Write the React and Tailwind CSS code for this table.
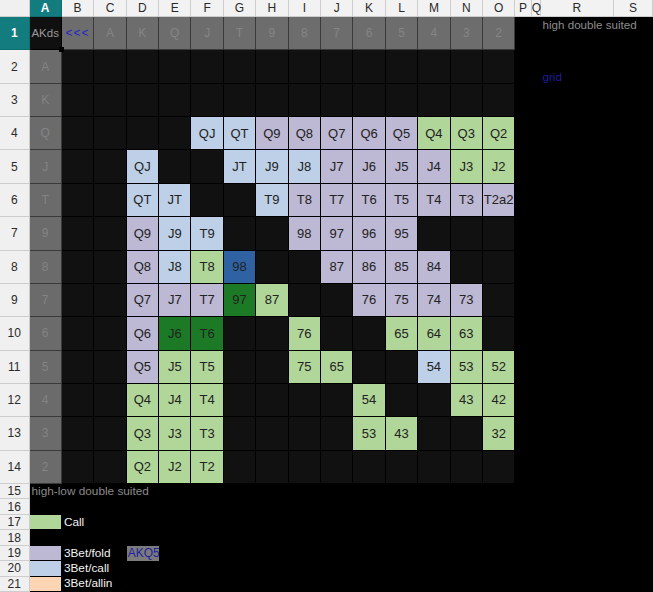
import React from "react";

const COLS = ["A","B","C","D","E","F","G","H","I","J","K","L","M","N","O","P","Q","R","S"];
const RANKS = ["A","K","Q","J","T","9","8","7","6","5","4","3","2"];

const TYPE = {
  k: "bg-[#111111]",
  l: "bg-[#bdb8d4]",
  b: "bg-[#bdd0e7]",
  g: "bg-[#b1d699]",
  G: "bg-[#1c7a27]",
  B: "bg-[#2f62a3]",
};

const GRID = {
  4: ["", "", "", "", "QJ b", "QT b", "Q9 l", "Q8 l", "Q7 l", "Q6 l", "Q5 l", "Q4 g", "Q3 g", "Q2 g"],
  5: ["", "", "QJ b", "", "", "JT b", "J9 b", "J8 b", "J7 l", "J6 l", "J5 l", "J4 l", "J3 g", "J2 g"],
  6: ["", "", "QT b", "JT b", "", "", "T9 b", "T8 l", "T7 l", "T6 l", "T5 l", "T4 l", "T3 l", "T2a2 l"],
  7: ["", "", "Q9 l", "J9 b", "T9 b", "", "", "98 l", "97 l", "96 l", "95 l", "", "", ""],
  8: ["", "", "Q8 l", "J8 b", "T8 g", "98 B", "", "", "87 l", "86 l", "85 l", "84 l", "", ""],
  9: ["", "", "Q7 l", "J7 l", "T7 l", "97 G", "87 g", "", "", "76 l", "75 l", "74 l", "73 l", ""],
  10: ["", "", "Q6 l", "J6 G", "T6 G", "", "", "76 g", "", "", "65 g", "64 g", "63 g", ""],
  11: ["", "", "Q5 l", "J5 g", "T5 g", "", "", "75 g", "65 g", "", "", "54 b", "53 g", "52 g"],
  12: ["", "", "Q4 g", "J4 g", "T4 g", "", "", "", "", "54 g", "", "", "43 g", "42 g"],
  13: ["", "", "Q3 g", "J3 g", "T3 g", "", "", "", "", "53 g", "43 g", "", "", "32 g"],
  14: ["", "", "Q2 g", "J2 g", "T2 g", "", "", "", "", "", "", "", "", ""],
};

function RowHead({ n, active }) {
  return (
    <div
      className={
        "flex items-center justify-center border-r border-b text-[12px] leading-none " +
        (active
          ? "bg-[#127c7f] border-[#0d6d70] text-white font-bold"
          : "bg-[#f0f0f0] border-[#cdcdcd] text-[#2a2a2a]")
      }
    >
      {n}
    </div>
  );
}

function Cell({ spec }) {
  if (!spec) return <div className="border-r border-b border-black bg-[#111111]" />;
  const [text, t] = spec.split(" ");
  return (
    <div
      className={
        "flex items-center justify-center border-r border-b border-black text-[13px] text-[#222] " +
        TYPE[t]
      }
    >
      {text}
    </div>
  );
}

function Right({ children, span }) {
  return <div className={"bg-black " + (span || "")}>{children}</div>;
}

export default function App() {
  const rows = [];

  // header row
  rows.push(<div key="corner" className="bg-[#f0f0f0] border-r border-b border-[#cdcdcd]" />);
  COLS.forEach((c) => {
    const active = c === "A";
    const narrow = c === "Q";
    rows.push(
      <div
        key={"h" + c}
        className={
          "flex items-center border-r border-b text-[12px] leading-none " +
          (active
            ? "bg-[#127c7f] border-[#0d6d70] text-white font-bold"
            : "bg-[#f2f2f2] border-[#cdcdcd] text-[#2a2a2a]") +
          (narrow ? " justify-start overflow-visible relative z-10 text-[11.5px]" : " justify-center overflow-hidden")
        }
      >
        {c}
      </div>
    );
  });

  // row 1
  rows.push(<RowHead key="r1" n={1} active />);
  rows.push(
    <div
      key="a1"
      className="relative flex items-center justify-center border-r border-b border-black bg-[#101010] text-[11.5px] text-[#9a9a9a]"
    >
      AKds
      <span className="absolute right-[-3px] bottom-[-3px] w-[5px] h-[5px] bg-black z-10" />
    </div>
  );
  rows.push(
    <div
      key="b1"
      className="flex items-center justify-center border-r border-b border-[#3a3a3a] bg-[#6d6d6d] text-[12px] text-[#2424c8] tracking-[1px]"
    >
      &lt;&lt;&lt;
    </div>
  );
  RANKS.forEach((r, i) => {
    rows.push(
      <div
        key={"t1" + i}
        className="flex items-center justify-center border-r border-b border-[#3a3a3a] bg-[#6d6d6d] text-[12px] text-[#858585]"
      >
        {r}
      </div>
    );
  });
  rows.push(<Right key="p1" />);
  rows.push(<Right key="q1" />);
  rows.push(
    <div key="r1t" className="col-span-2 bg-black pl-[2px] pt-[2px] leading-none text-[11.6px] text-[#8d8d8d] whitespace-nowrap">
      high double suited
    </div>
  );

  // rows 2-14
  for (let r = 2; r <= 14; r++) {
    rows.push(<RowHead key={"rh" + r} n={r} />);
    rows.push(
      <div
        key={"ra" + r}
        className="flex items-center justify-center border-r border-b border-[#3a3a3a] bg-[#6b6b6b] text-[12px] text-[#838383]"
      >
        {RANKS[r - 2]}
      </div>
    );
    const data = GRID[r] || Array(14).fill("");
    data.forEach((s, i) => rows.push(<Cell key={"c" + r + "-" + i} spec={s} />));
    rows.push(<Right key={"p" + r} />);
    rows.push(<Right key={"q" + r} />);
    if (r === 2) {
      rows.push(
        <div key={"rr" + r} className="bg-black flex items-end pl-[2px] pb-[1px] leading-none text-[11.6px] text-[#1e1e9e]">
          grid
        </div>
      );
    } else {
      rows.push(<Right key={"rr" + r} />);
    }
    rows.push(<Right key={"s" + r} />);
  }

  const legendText = "bg-black pl-[2px] text-[11.8px] leading-none flex items-center whitespace-nowrap";

  // row 15
  rows.push(<RowHead key="rh15" n={15} />);
  rows.push(
    <div key="l15" className={"col-span-19 text-[#8a8a8a] " + legendText}>
      high-low double suited
    </div>
  );
  // row 16
  rows.push(<RowHead key="rh16" n={16} />);
  rows.push(<Right key="l16" span="col-span-19" />);
  // row 17
  rows.push(<RowHead key="rh17" n={17} />);
  rows.push(<div key="s17" className="bg-[#b1d699] border-r border-b border-black" />);
  rows.push(
    <div key="l17" className={"col-span-18 text-[#f2f2f2] " + legendText}>
      Call
    </div>
  );
  // row 18
  rows.push(<RowHead key="rh18" n={18} />);
  rows.push(<Right key="l18" span="col-span-19" />);
  // row 19
  rows.push(<RowHead key="rh19" n={19} />);
  rows.push(<div key="s19" className="bg-[#bdb8d4] border-r border-b border-black" />);
  rows.push(
    <div key="l19" className={"col-span-2 text-[#f2f2f2] " + legendText}>
      3Bet/fold
    </div>
  );
  rows.push(
    <div key="d19" className="bg-black flex items-center">
      <span className="bg-[#7b7b7b] text-[#1e1e9e] text-[12px] leading-none px-[1px] h-full flex items-center">
        AKQ5
      </span>
    </div>
  );
  rows.push(<Right key="r19" span="col-span-15" />);
  // row 20
  rows.push(<RowHead key="rh20" n={20} />);
  rows.push(<div key="s20" className="bg-[#bdd0e7] border-r border-b border-black" />);
  rows.push(
    <div key="l20" className={"col-span-18 text-[#f2f2f2] " + legendText}>
      3Bet/call
    </div>
  );
  // row 21
  rows.push(<RowHead key="rh21" n={21} />);
  rows.push(<div key="s21" className="bg-[#fcd5b4] border-r border-b border-black" />);
  rows.push(
    <div key="l21" className={"col-span-18 text-[#f2f2f2] " + legendText}>
      3Bet/allin
    </div>
  );

  return (
    <div
      className="w-[653px] h-[592px] overflow-hidden bg-black grid grid-cols-[29.5px_repeat(15,32.4px)_16.5px_8.7px_73.6px_1fr] grid-rows-[17px_repeat(14,33.36px)_repeat(7,15.43px)]"
      style={{ fontFamily: '"Liberation Sans", Arial, sans-serif' }}
    >
      {rows}
    </div>
  );
}
